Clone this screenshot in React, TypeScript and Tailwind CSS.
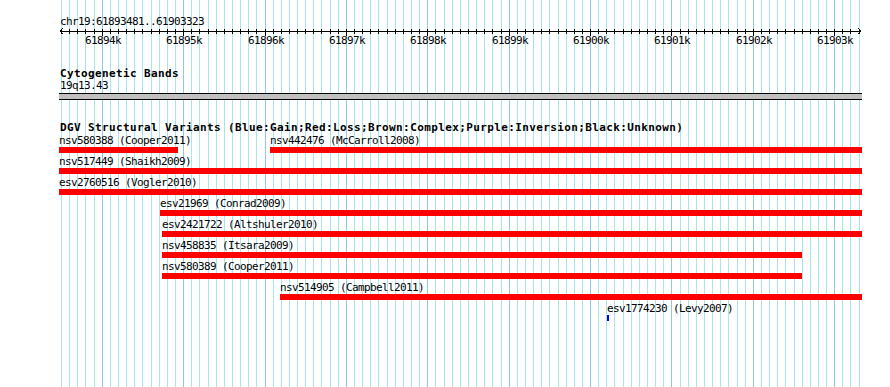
import React from "react";

const START = 61893481;
const END = 61903323;
const X0 = 60;
const W = 801;
const px = (p: number) => Math.floor(X0 + ((p - START) * W) / (END - START));

type Feat = { l: number; r: number; label: string; blue?: boolean };

const rows: Feat[][] = [
  [
    { l: 59, r: 178, label: "nsv580388 (Cooper2011)" },
    { l: 270, r: 862, label: "nsv442476 (McCarroll2008)" },
  ],
  [{ l: 59, r: 862, label: "nsv517449 (Shaikh2009)" }],
  [{ l: 59, r: 862, label: "esv2760516 (Vogler2010)" }],
  [{ l: 160, r: 862, label: "esv21969 (Conrad2009)" }],
  [{ l: 162, r: 862, label: "esv2421722 (Altshuler2010)" }],
  [{ l: 162, r: 802, label: "nsv458835 (Itsara2009)" }],
  [{ l: 162, r: 802, label: "nsv580389 (Cooper2011)" }],
  [{ l: 280, r: 862, label: "nsv514905 (Campbell2011)" }],
  [{ l: 607, r: 609, label: "esv1774230 (Levy2007)", blue: true }],
];

const minor: number[] = [];
for (let p = 61893500; p <= 61903300; p += 100) minor.push(p);
const major: number[] = [];
for (let p = 61894000; p <= 61903000; p += 1000) major.push(p);

const MONO = "DejaVu Sans Mono, monospace";

export default function App() {
  return (
    <div className="relative w-[890px] h-[387px] overflow-hidden bg-white text-black font-['DejaVu_Sans_Mono',monospace]">
      {/* background grid */}
      <svg className="absolute inset-0" width={890} height={387}>
        {minor.map((p) => (
          <rect
            key={p}
            x={px(p)}
            y={0}
            width={1}
            height={387}
            fill={p % 1000 === 0 ? "#8ec8ec" : "#a8e6ee"}
          />
        ))}
      </svg>

      <div className="relative flex flex-col">
        {/* ruler */}
        <svg width={890} height={50} className="block">
          <text x={60} y={25} fontFamily={MONO} fontSize={11} letterSpacing={-0.62} fill="#000">
            chr19:61893481..61903323
          </text>
          <rect x={60} y={31} width={801} height={1} fill="#000" />
          <path d="M63 28 L60 31 L63 34" stroke="#000" fill="none" strokeWidth={1} />
          <path d="M858 28 L861 31 L858 34" stroke="#000" fill="none" strokeWidth={1} />
          {minor.map((p) => (
            <rect
              key={p}
              x={px(p)}
              y={29}
              width={1}
              height={p % 1000 === 0 ? 7 : 5}
              fill="#000"
            />
          ))}
          {major.map((p) => (
            <text
              key={p}
              x={px(p) + 1}
              y={44}
              textAnchor="middle"
              fontFamily={MONO}
              fontSize={11}
              letterSpacing={-0.62}
              fill="#000"
            >
              {`${Math.round(p / 1000)}k`}
            </text>
          ))}
        </svg>

        {/* cytogenetic bands */}
        <div className="mt-[18px] flex flex-col">
          <div className="pl-[60px] text-[11px] font-bold leading-[12px] tracking-[0.38px] whitespace-nowrap">
            Cytogenetic Bands
          </div>
          <div className="pl-[60px] text-[11px] leading-[12px] tracking-[-0.62px] whitespace-nowrap">
            19q13.43
          </div>
          <div className="mt-[1px] ml-[59px] w-[803px] h-[7px] border-y border-black bg-[#c0c0c0]" />
        </div>

        {/* DGV structural variants */}
        <div className="mt-[21px] flex flex-col">
          <div className="pl-[60px] text-[11px] font-bold leading-[13px] tracking-[0.38px] whitespace-nowrap">
            DGV Structural Variants (Blue:Gain;Red:Loss;Brown:Complex;Purple:Inversion;Black:Unknown)
          </div>
          <div className="flex flex-col gap-[2px]">
            {rows.map((row, i) => (
              <div key={i} className="relative h-[19px]">
                {row.map((f) => (
                  <div
                    key={f.label}
                    className="absolute top-0 flex flex-col items-start"
                    style={{ left: f.l }}
                  >
                    <div className="h-[13px] text-[11px] leading-[13px] tracking-[-0.62px] whitespace-nowrap">
                      {f.label}
                    </div>
                    <div
                      className={f.blue ? "h-[6px] bg-[#0000ff]" : "h-[6px] bg-[#ff0000]"}
                      style={{ width: f.r - f.l }}
                    />
                  </div>
                ))}
              </div>
            ))}
          </div>
        </div>
      </div>
    </div>
  );
}
